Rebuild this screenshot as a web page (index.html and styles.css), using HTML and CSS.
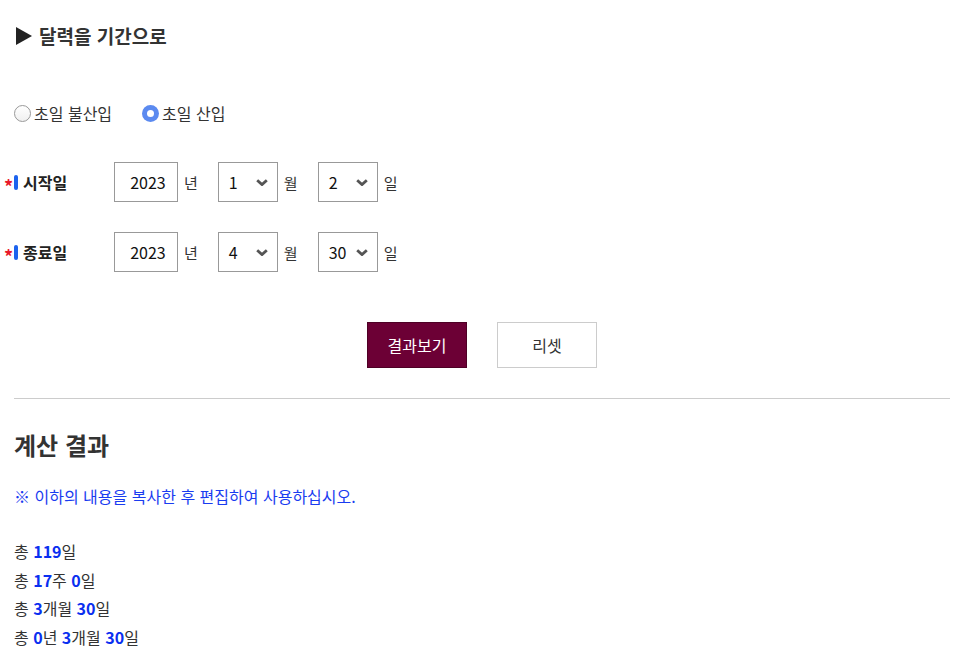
FILE: index.html
```html
<!DOCTYPE html>
<html lang="ko">
<head>
<meta charset="utf-8">
<link rel="stylesheet" href="styles.css">
</head>
<body>
<div class="page">
  <h1 class="title"><span class="tri"></span>달력을 기간으로</h1>

  <div class="radios">
    <label class="radio"><span class="dot"></span>초일 불산입</label>
    <label class="radio"><span class="dot on"></span>초일 산입</label>
  </div>

  <div class="row">
    <div class="lbl"><span class="star">*</span><span class="bar"></span>시작일</div>
    <div class="box num">2023</div><span class="unit">년</span>
    <div class="box sel"><span>1</span><svg class="chev" viewBox="0 0 12 7"><path d="M1.2 1.2 L6 5.6 L10.8 1.2" fill="none" stroke="#555" stroke-width="2.8"/></svg></div><span class="unit">월</span>
    <div class="box sel"><span>2</span><svg class="chev" viewBox="0 0 12 7"><path d="M1.2 1.2 L6 5.6 L10.8 1.2" fill="none" stroke="#555" stroke-width="2.8"/></svg></div><span class="unit">일</span>
  </div>

  <div class="row">
    <div class="lbl"><span class="star">*</span><span class="bar"></span>종료일</div>
    <div class="box num">2023</div><span class="unit">년</span>
    <div class="box sel"><span>4</span><svg class="chev" viewBox="0 0 12 7"><path d="M1.2 1.2 L6 5.6 L10.8 1.2" fill="none" stroke="#555" stroke-width="2.8"/></svg></div><span class="unit">월</span>
    <div class="box sel"><span>30</span><svg class="chev" viewBox="0 0 12 7"><path d="M1.2 1.2 L6 5.6 L10.8 1.2" fill="none" stroke="#555" stroke-width="2.8"/></svg></div><span class="unit">일</span>
  </div>

  <div class="buttons">
    <button class="btn primary">결과보기</button>
    <button class="btn">리셋</button>
  </div>

  <hr class="sep">

  <h2 class="subtitle">계산 결과</h2>
  <p class="notice">※ 이하의 내용을 복사한 후 편집하여 사용하십시오.</p>

  <ul class="results">
    <li>총 <b>119</b>일</li>
    <li>총 <b>17</b>주 <b>0</b>일</li>
    <li>총 <b>3</b>개월 <b>30</b>일</li>
    <li>총 <b>0</b>년 <b>3</b>개월 <b>30</b>일</li>
  </ul>
</div>
</body>
</html>
```
FILE: styles.css
```css
* { box-sizing: border-box; }
html, body { margin: 0; padding: 0; background: #fff; }
body {
  font-family: "Noto Sans CJK KR", "Noto Sans", sans-serif;
  font-size: 16px;
  color: #333;
}
.page { padding: 0 16px 0 14px; }

.title {
  margin: 0;
  padding-top: 33px;
  height: 38px;
  font-size: 19px;
  font-weight: 700;
  line-height: 28px;
  display: flex;
  align-items: center;
  color: #333;
}
.tri {
  width: 0; height: 0;
  margin-left: 2px;
  margin-right: 7px;
  border-top: 9px solid transparent;
  border-bottom: 9px solid transparent;
  border-left: 16px solid #222;
}

.radios {
  display: flex;
  gap: 30px;
  margin-top: 62px;
  height: 26px;
  align-items: center;
}
.radio { display: flex; align-items: center; line-height: 26px; }
.dot {
  width: 17px; height: 17px;
  border-radius: 50%;
  border: 1px solid #999;
  background: linear-gradient(#fff, #f0f0f0);
  margin-right: 3px;
  position: relative;
}
.dot.on {
  border: none;
  background: #5b8af0;
}
.dot.on::after {
  content: "";
  position: absolute;
  left: 5px; top: 5px;
  width: 7px; height: 7px;
  border-radius: 50%;
  background: #fff;
}

.row {
  display: flex;
  align-items: center;
  height: 40px;
  margin-top: 36px;
}
.row + .row { margin-top: 30px; }
.lbl {
  width: 110px;
  margin-left: -10px;
  display: flex;
  align-items: center;
  font-weight: 700;
  font-size: 16px;
  color: #222;
}
.star {
  color: #e8182a;
  font-size: 18px;
  font-weight: 700;
  width: 10px;
  line-height: 1;
  position: relative;
  top: 4px;
}
.bar { width: 4px; height: 15px; background: #1d63ee; border-radius: 2px; margin-right: 5px; }
.box {
  height: 40px;
  border: 1px solid #999;
  display: flex;
  align-items: center;
  font-size: 16px;
  color: #111;
}
.num { width: 64px; justify-content: center; padding-left: 4px; }
.sel { width: 60px; padding: 0 9px 0 10px; justify-content: space-between; }
.chev { width: 12px; height: 7px; }
.unit { margin: 0 20px 0 6px; font-size: 15px; color: #333; }

.buttons {
  display: flex;
  justify-content: center;
  gap: 30px;
  margin-top: 50px;
}
.btn {
  width: 100px; height: 46px;
  border: 1px solid #ccc;
  background: #fff;
  font-family: inherit;
  font-size: 16px;
  color: #333;
  padding: 0;
}
.btn.primary { background: #6c0035; border-color: #4e0025; color: #fff; }

.sep {
  margin: 30px 0 0 0;
  border: none;
  border-top: 1px solid #ccc;
  height: 0;
}

.subtitle {
  margin: 30px 0 0 0;
  font-size: 24px;
  font-weight: 700;
  line-height: 32px;
  color: #333;
}
.notice {
  margin: 22px 0 0 0;
  color: #1a3cf0;
  font-size: 16px;
  line-height: 26px;
}
.results {
  list-style: none;
  margin: 28px 0 0 0;
  padding: 0;
}
.results li { line-height: 28.7px; font-size: 16px; color: #333; }
.results b { color: #0a2ff0; font-weight: 700; }
```
